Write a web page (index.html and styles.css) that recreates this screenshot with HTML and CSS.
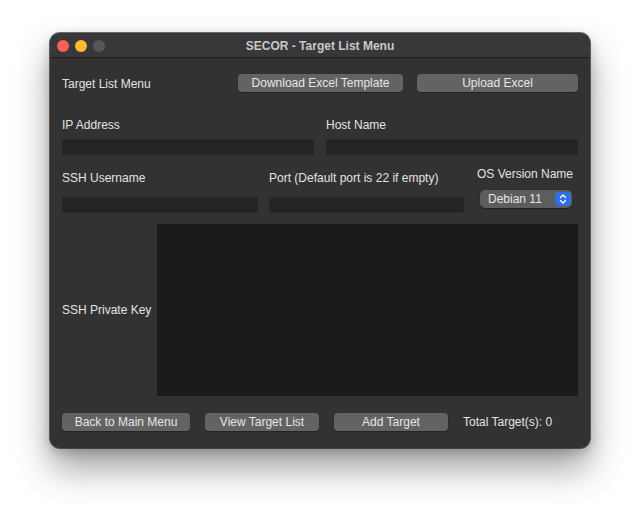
FILE: index.html
```html
<!DOCTYPE html>
<html>
<head>
<meta charset="utf-8">
<link rel="stylesheet" href="styles.css">
</head>
<body>
<div class="window">
  <div class="titlebar">
    <div class="lights">
      <span class="light red"></span>
      <span class="light yellow"></span>
      <span class="light gray"></span>
    </div>
    <div class="title">SECOR - Target List Menu</div>
  </div>
  <div class="content">
    <div class="row top-row">
      <div class="label top-label">Target List Menu</div>
      <button class="btn btn-download">Download Excel Template</button>
      <button class="btn btn-upload">Upload Excel</button>
    </div>
    <div class="row two-col">
      <div class="field-col">
        <div class="label">IP Address</div>
        <div class="input"></div>
      </div>
      <div class="field-col">
        <div class="label">Host Name</div>
        <div class="input"></div>
      </div>
    </div>
    <div class="row three-col">
      <div class="field-col col-user">
        <div class="label">SSH Username</div>
        <div class="input"></div>
      </div>
      <div class="field-col col-port">
        <div class="label">Port (Default port is 22 if empty)</div>
        <div class="input"></div>
      </div>
      <div class="field-col col-os">
        <div class="label">OS Version Name</div>
        <div class="popup">
          <span class="popup-text">Debian 11</span>
          <span class="stepper">
            <svg width="16" height="14" viewBox="0 0 16 14"><path d="M5.5 5.5 L8 3 L10.5 5.5 M5.5 8.5 L8 11 L10.5 8.5" fill="none" stroke="#fff" stroke-width="1.4" stroke-linecap="round" stroke-linejoin="round"/></svg>
          </span>
        </div>
      </div>
    </div>
    <div class="row key-row">
      <div class="label key-label">SSH Private Key</div>
      <div class="textarea"></div>
    </div>
    <div class="row bottom-row">
      <button class="btn btn-back">Back to Main Menu</button>
      <button class="btn btn-view">View Target List</button>
      <button class="btn btn-add">Add Target</button>
      <div class="label total">Total Target(s): 0</div>
    </div>
  </div>
</div>
</body>
</html>
```

FILE: styles.css
```css
html, body {
  margin: 0;
  padding: 0;
  background: #ffffff;
}
body {
  width: 640px;
  height: 516px;
  overflow: hidden;
  font-family: "Liberation Sans", Arial, sans-serif;
}
.window {
  margin: 33px 0 0 50px;
  width: 540px;
  height: 415px;
  box-sizing: border-box;
  background: #323232;
  border-radius: 10px;
  box-shadow: 0 0 0 1px rgba(0,0,0,0.55), inset 0 1px 0 rgba(255,255,255,0.12), 0 20px 36px rgba(0,0,0,0.38), 0 4px 12px rgba(0,0,0,0.2);
  overflow: hidden;
}
.titlebar {
  height: 24px;
  background: #38383a;
  border-bottom: 1px solid #1c1c1c;
  display: flex;
  align-items: center;
  position: relative;
}
.lights {
  display: flex;
  gap: 6px;
  padding-left: 7px;
  padding-top: 2px;
}
.light {
  width: 12px;
  height: 12px;
  border-radius: 50%;
  display: block;
}
.red { background: #fe5f57; }
.yellow { background: #febc2e; }
.gray { background: #57575a; }
.title {
  position: absolute;
  left: 0;
  right: 0;
  top: 6px;
  text-align: center;
  font-size: 12px;
  font-weight: bold;
  color: #c9c9c9;
  line-height: 14px;
}
.content {
  padding: 0 12px;
  color: #e2e2e2;
}
.label {
  font-size: 12px;
  line-height: 14px;
  color: #e3e3e3;
  white-space: nowrap;
}
.btn {
  font-family: "Liberation Sans", Arial, sans-serif;
  font-size: 12px;
  color: #e6e6e6;
  background: #636363;
  border: none;
  border-radius: 4px;
  height: 18px;
  padding: 0;
  line-height: 18px;
  box-shadow: 0 0.5px 1px rgba(0,0,0,0.3);
}
.top-row {
  display: flex;
  align-items: center;
  margin-top: 16px;
  height: 18px;
}
.top-label { width: 176px; padding-top: 1px; }
.btn-download { width: 165px; }
.btn-upload { width: 161px; margin-left: 14px; }

.two-col {
  display: flex;
  gap: 12px;
  margin-top: 26px;
}
.two-col .field-col { width: 252px; }
.field-col .label { height: 14px; }
.input {
  height: 16px;
  background: #242424;
  margin-top: 7px;
  box-shadow: inset 0 0 0 1px #282828;
}
.three-col {
  display: flex;
  align-items: flex-start;
  margin-top: 16px;
}
.col-user { width: 196px; }
.col-port { width: 195px; margin-left: 11px; }
.col-os { margin-left: 13px; margin-top: -4px; }
.three-col .col-user .input,
.three-col .col-port .input { margin-top: 12px; }
.popup {
  margin-top: 9px;
  margin-left: 3px;
  width: 92px;
  height: 18px;
  background: #5d5d5d;
  border-radius: 5px;
  display: flex;
  align-items: center;
  justify-content: space-between;
  box-shadow: 0 0.5px 1px rgba(0,0,0,0.35);
}
.popup-text {
  font-size: 12px;
  color: #e4e4e4;
  padding-left: 8px;
}
.stepper {
  width: 16px;
  height: 14px;
  margin-right: 1px;
  background: #2f6fe4;
  border-radius: 4px;
  display: block;
}
.stepper svg { display: block; }
.key-row {
  display: flex;
  align-items: center;
  margin-top: 11px;
}
.key-label { width: 95px; }
.textarea {
  width: 421px;
  height: 172px;
  background: #1b1b1b;
}
.bottom-row {
  display: flex;
  align-items: center;
  margin-top: 17px;
}
.btn-back { width: 128px; }
.btn-view { width: 114px; margin-left: 15px; }
.btn-add { width: 114px; margin-left: 15px; }
.total { margin-left: 15px; }
```
